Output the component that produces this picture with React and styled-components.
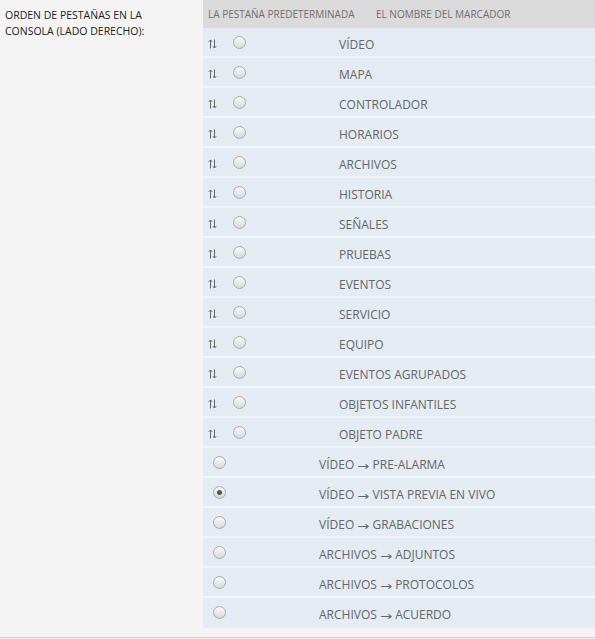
import React from "react";
import styled, { createGlobalStyle } from "styled-components";

const GlobalStyle = createGlobalStyle`
  html, body {
    margin: 0;
    padding: 0;
    background: #f4f4f4;
    font-family: "Open Sans", "Liberation Sans", sans-serif;
  }
`;

const Page = styled.div`
  display: grid;
  grid-template-columns: 203px 1fr;
  padding-bottom: 9px;
  border-bottom: 1px solid #cfcfcf;
`;

const Label = styled.div`
  padding: 7px 0 0 5px;
  font-size: 10.5px;
  line-height: 16px;
  color: #222;
  text-transform: uppercase;
`;

const Table = styled.div`
  display: flex;
  flex-direction: column;
`;

const Header = styled.div`
  display: flex;
  align-items: center;
  height: 28px;
  padding-left: 5px;
  background: #dadada;
  font-size: 10px;
  color: #6f6f6f;
`;

const HeaderCell = styled.span`
  width: ${(p) => p.$width || "auto"};
`;

const Row = styled.div`
  box-sizing: border-box;
  display: flex;
  align-items: center;
  height: 30px;
  padding-top: 4px;
  padding-left: ${(p) => (p.$handle ? "5px" : "10px")};
  background: #e4ebf2;
  border-bottom: 2px solid #f1f5f9;
  &:last-child {
    border-bottom-color: transparent;
  }
`;

const Handle = styled.span`
  display: flex;
  align-items: center;
  width: 25px;
  color: #666;
`;

const Radio = styled.span`
  box-sizing: border-box;
  width: 13px;
  height: 13px;
  margin-top: -3px;
  border-radius: 50%;
  border: 1px solid #aaa;
  background: linear-gradient(#fafafa, #d8d8d8);
  display: flex;
  align-items: center;
  justify-content: center;
  &::after {
    content: "";
    width: 5px;
    height: 5px;
    border-radius: 50%;
    background: ${(p) => (p.$checked ? "#555" : "transparent")};
  }
`;

const Name = styled.span`
  margin-left: 93px;
  font-size: 12px;
  color: #666;
`;

const Arrow = styled.span`
  display: inline-block;
  font-family: "DejaVu Sans", sans-serif;
  font-size: 12px;
  transform: scaleX(1.2);
  margin: 0 1px;
  position: relative;
  top: 1px;
`;

const SortIcon = () => (
  <svg width="9" height="10" viewBox="0 0 9 10" fill="none" stroke="#666" strokeWidth="1">
    <path d="M2.5 9.5V1M0.8 2.8L2.5 1 4.2 2.8" />
    <path d="M6.5 0.5V9M4.8 7.2L6.5 9 8.2 7.2" />
  </svg>
);

const tabs = [
  "VÍDEO",
  "MAPA",
  "CONTROLADOR",
  "HORARIOS",
  "ARCHIVOS",
  "HISTORIA",
  "SEÑALES",
  "PRUEBAS",
  "EVENTOS",
  "SERVICIO",
  "EQUIPO",
  "EVENTOS AGRUPADOS",
  "OBJETOS INFANTILES",
  "OBJETO PADRE",
];

const subTabs = [
  ["VÍDEO", "PRE-ALARMA", false],
  ["VÍDEO", "VISTA PREVIA EN VIVO", true],
  ["VÍDEO", "GRABACIONES", false],
  ["ARCHIVOS", "ADJUNTOS", false],
  ["ARCHIVOS", "PROTOCOLOS", false],
  ["ARCHIVOS", "ACUERDO", false],
];

export default function App() {
  return (
    <>
      <GlobalStyle />
      <Page>
        <Label>
          Orden de pestañas en la
          <br />
          consola (lado derecho):
        </Label>
        <Table>
          <Header>
            <HeaderCell $width="168px">LA PESTAÑA PREDETERMINADA</HeaderCell>
            <HeaderCell>EL NOMBRE DEL MARCADOR</HeaderCell>
          </Header>
          {tabs.map((t) => (
            <Row key={t} $handle>
              <Handle>
                <SortIcon />
              </Handle>
              <Radio />
              <Name>{t}</Name>
            </Row>
          ))}
          {subTabs.map(([parent, child, checked]) => (
            <Row key={child}>
              <Radio $checked={checked} />
              <Name>
                {parent} <Arrow>→</Arrow> {child}
              </Name>
            </Row>
          ))}
        </Table>
      </Page>
    </>
  );
}
